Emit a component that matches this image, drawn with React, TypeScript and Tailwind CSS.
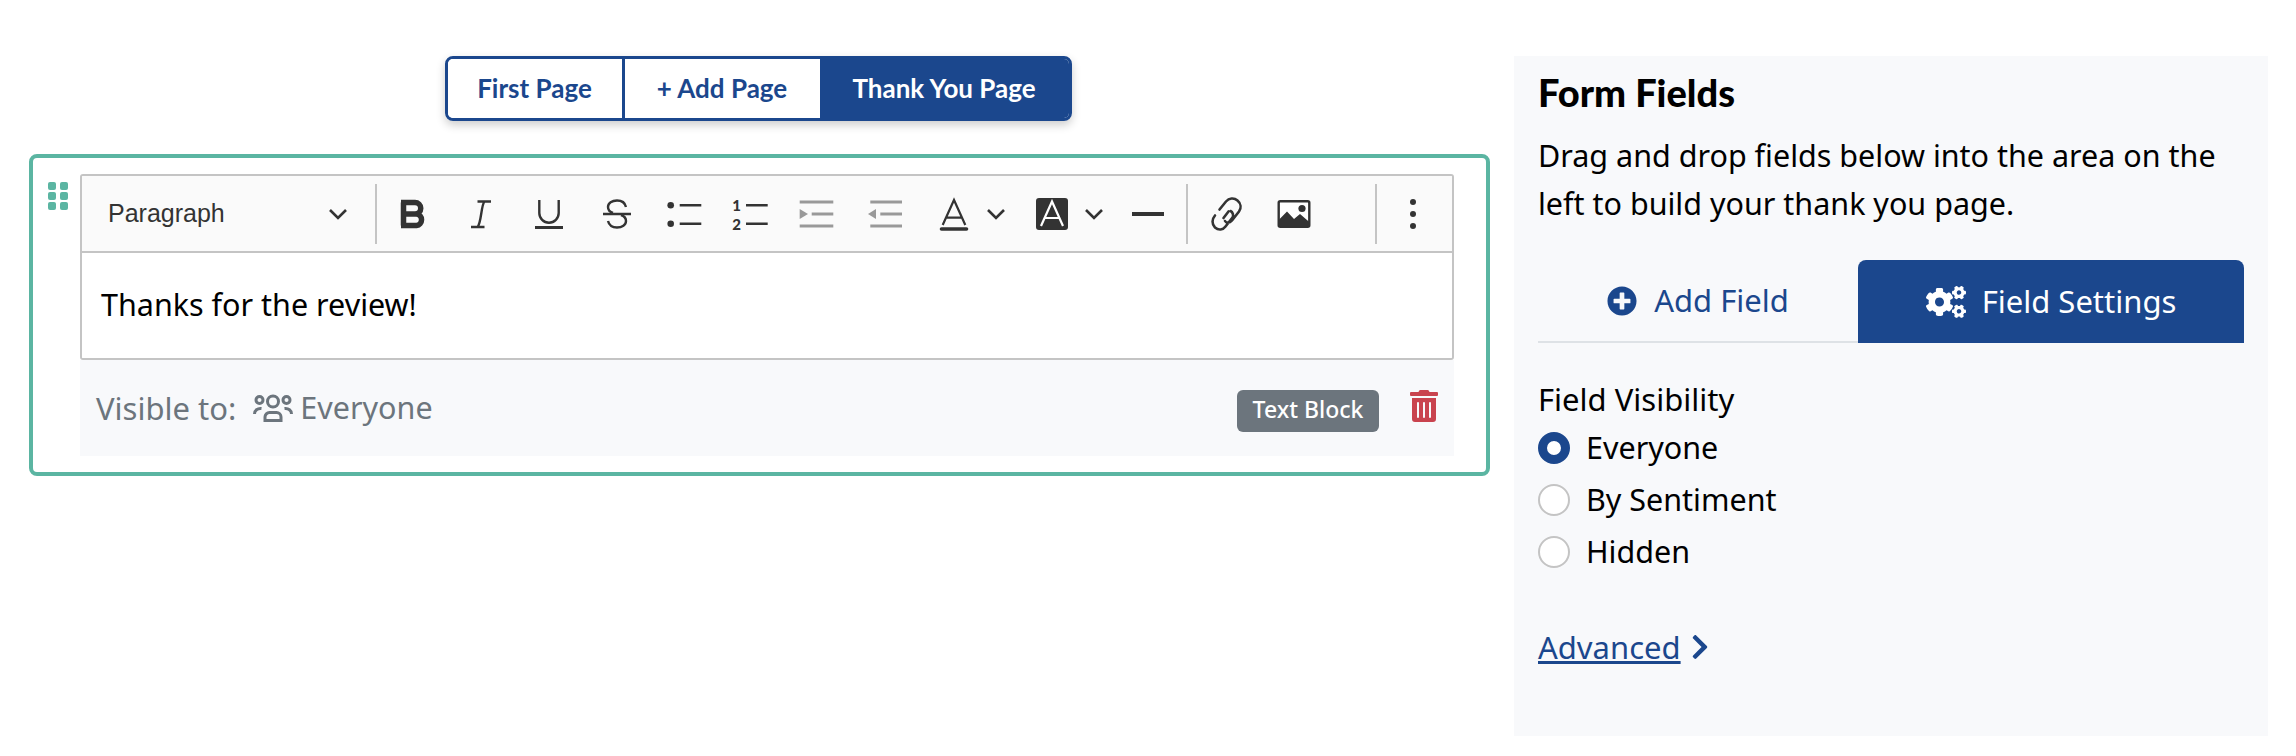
import { FaChevronRight, FaCogs, FaPlusCircle, FaTrashAlt } from 'react-icons/fa';

const Sep = ({ className = '' }: { className?: string }) => (
  <div className={`h-[60px] w-[2px] shrink-0 bg-[#c4c4c4] ${className}`} />
);

const Chevron = () => (
  <svg width="20" height="20" viewBox="0 0 20 20" fill="none" stroke="#333" strokeWidth="2.6">
    <path d="M2 6l8 8 8-8" />
  </svg>
);

const Ico = ({ children, className = 'w-[68px]' }: { children: React.ReactNode; className?: string }) => (
  <div className={`flex h-full shrink-0 items-center justify-center ${className}`}>
    <svg width="48" height="48" viewBox="0 0 48 48" fill="none" stroke="#333" strokeWidth="2.4">
      {children}
    </svg>
  </div>
);

const ChevronBox = () => (
  <div className="flex h-full w-[20px] shrink-0 items-center justify-center">
    <Chevron />
  </div>
);

const Toolbar = () => (
  <div className="flex h-[77px] items-center border-b-2 border-[#c4c4c4] bg-[#fafafa]">
    <div className="flex h-full w-[293px] shrink-0 items-center justify-between pl-[26px] pr-[27px]">
      <span className='font-["Liberation_Sans",sans-serif] text-[25px] text-[#333]'>Paragraph</span>
      <Chevron />
    </div>
    <Sep />
    <div className="w-[2px] shrink-0" />
    <Ico>
      <path strokeWidth="5.5" d="M14.5 12.500V35.500M12 12.500H26a5.700 5.700 0 0 1 0 11.500H14.500M26 24h1.500a5.800 5.800 0 0 1 0 11.500H12" />
    </Ico>
    <Ico>
      <path d="M20.500 11.500H34M14 37H27.500M27.500 11.500C24 15 24.500 33 20.500 37" />
    </Ico>
    <Ico>
      <path d="M14.300 10V23a9.700 9.700 0 0 0 19.400 0V10" />
      <path strokeWidth="3" d="M10 37.500H38" />
    </Ico>
    <Ico>
      <path d="M33 17C32 12.500 28 10.500 24 10.500C19 10.500 15 13 15 17C15 20 17 22 20 23M28 25C31 26 33 28 33 31C33 35 29 37.500 24 37.500C19 37.500 16 35 15 31" />
      <path strokeWidth="2.600" d="M10 24H38" />
    </Ico>
    <Ico className="w-[65px]">
      <circle cx="10.700" cy="15.300" r="3.300" fill="#333" stroke="none" />
      <circle cx="10.700" cy="33.700" r="3.300" fill="#333" stroke="none" />
      <path strokeWidth="2.600" d="M19.700 15.300H41.300M19.700 33.700H41.300" />
    </Ico>
    <Ico>
      <text x="10.500" y="21" textAnchor="middle" fill="#333" stroke="none" fontSize="15" fontWeight="900" fontFamily="Lato, sans-serif">1</text>
      <text x="10.500" y="40" textAnchor="middle" fill="#333" stroke="none" fontSize="15" fontWeight="900" fontFamily="Lato, sans-serif">2</text>
      <path strokeWidth="2.600" d="M20 15.300H41.700M20 33.700H41.700" />
    </Ico>
    <Ico className="w-[66px]">
      <path stroke="#999" strokeWidth="3" d="M6.700 12H40.300M18.700 24H40.300M6.700 36H40.300" />
      <path fill="#999" stroke="none" d="M6.700 19L15 24L6.700 29Z" />
    </Ico>
    <Ico className="w-[72px]">
      <path stroke="#999" strokeWidth="3" d="M8.300 12H40M18.300 24H40M8.300 36H40" />
      <path fill="#999" stroke="none" d="M6 24L14 19V29Z" />
    </Ico>
    <Ico className="w-[64px]">
      <path strokeWidth="2.200" d="M12.700 35L24 10L35.300 35M16.500 27.700H31.500" />
      <path strokeWidth="3.600" strokeLinecap="round" d="M11.500 39H36.500" />
    </Ico>
    <ChevronBox />
    <Ico className="ml-[16px] w-[60px]">
      <rect x="8" y="8" width="32" height="32" rx="3" fill="#333" stroke="none" />
      <path stroke="#fff" strokeWidth="2.200" d="M13 36L24 11.500L35 36M16.500 28H31.500" />
    </Ico>
    <div className="ml-[2px] flex h-full items-center">
      <ChevronBox />
    </div>
    <Ico className="ml-[10px] w-[68px]">
      <path strokeWidth="4" d="M8 24H40" />
    </Ico>
    <Sep className="ml-[4px]" />
    <Ico className="ml-[4px] w-[68px]">
      <path strokeWidth="2.600" strokeLinecap="round" d="M17.500 19.500L24 11.500C27 8 32 7.500 35.500 10.500C39 13.500 39.500 18 37 21.500L30 30.500C27.500 33.500 24 33 23 31M13 25.500C10 29 9.500 34 13 37.500C16.500 40.500 21 40 23.500 36.500L30.500 27.500C32 25 30.500 22 28.500 21M21.500 28L26.500 21.500" />
    </Ico>
    <Ico className="w-[68px]">
      <rect x="8.700" y="11.200" width="30.600" height="25.600" rx="1.500" stroke="#333" strokeWidth="2.400" fill="#fff" />
      <circle cx="32" cy="18.500" r="3.600" fill="#333" stroke="none" />
      <path fill="#333" stroke="none" d="M8.700 30L17 21.500L24 29L30 24L39.300 32V36.800H8.700Z" />
    </Ico>
    <Sep className="ml-auto" />
    <Ico className="ml-[2px] mr-[5px] w-[68px]">
      <circle cx="24" cy="12" r="3" fill="#333" stroke="none" />
      <circle cx="24" cy="24" r="3" fill="#333" stroke="none" />
      <circle cx="24" cy="36" r="3" fill="#333" stroke="none" />
    </Ico>
  </div>
);

const Radio = ({ label, checked = false }: { label: string; checked?: boolean }) => (
  <div className="flex h-[52px] items-center gap-4">
    {checked ? (
      <span className="h-8 w-8 rounded-full border-[9px] border-[#1b478d] bg-white" />
    ) : (
      <span className="h-8 w-8 rounded-full border-2 border-[#c4c4c4] bg-white" />
    )}
    <span className="pb-[2px] text-[30.5px] leading-10 text-black">{label}</span>
  </div>
);

export default function App() {
  const pageBtn = 'flex h-full items-center justify-center font-["Lato",sans-serif] text-[26px] font-bold';
  return (
    <div className='flex h-[756px] w-[2296px] bg-white pt-14 font-["Noto_Sans",sans-serif]'>
      <div className="ml-[29px] w-[1461px] shrink-0">
        <div className="flex justify-center pr-[3px]">
          <div className="flex h-[65px] w-[627px] overflow-hidden rounded-lg border-[3px] border-[#1b478d] shadow-[0_4px_10px_rgba(0,0,0,0.2)]">
            <div className={`${pageBtn} w-[177px] border-r-[3px] border-[#1b478d] bg-white text-[#1b478d]`}>First Page</div>
            <div className={`${pageBtn} w-[195px] bg-white text-[#1b478d]`}>+ Add Page</div>
            <div className={`${pageBtn} flex-1 bg-[#1b478d] text-white`}>Thank You Page</div>
          </div>
        </div>

        <div className="mt-[33px] flex h-[322px] gap-3 rounded-lg border-4 border-[#5bb5a2] pb-4 pl-[15px] pr-8 pt-4">
          <div className="mt-2 grid h-7 w-5 shrink-0 grid-cols-2 gap-x-1 gap-y-[2px]">
            {[0, 1, 2, 3, 4, 5].map((i) => (
              <span key={i} className="h-2 w-2 rounded-[2px] bg-[#5bb5a2]" />
            ))}
          </div>
          <div className="flex flex-1 flex-col">
            <div className="overflow-hidden rounded-[3px] border-2 border-[#c4c4c4]">
              <Toolbar />
              <div className="flex h-[105px] items-center bg-white pb-[2px] pl-[19px] text-[30.5px] text-black">Thanks for the review!</div>
            </div>
            <div className="flex flex-1 items-center bg-[#f8f9fb] pl-4 pr-[16px] text-[31px] text-[#6c757d]">
              <span>Visible to:</span>
              <svg className="ml-[17px] mr-[7px]" width="40" height="30" viewBox="0 0 40 30" fill="none" stroke="#6c757d" strokeWidth="3">
                <circle cx="20" cy="8.500" r="5.500" />
                <circle cx="6.500" cy="7" r="3.500" />
                <circle cx="33.500" cy="7" r="3.500" />
                <path d="M12 27.500V24a4.500 4.500 0 0 1 4.500-4.500h7A4.500 4.500 0 0 1 28 24v3.500ZM1.500 21c0-3.500 3-6 7-5.500M38.500 21c0-3.500-3-6-7-5.500" />
              </svg>
              <span className="text-[30.5px]">Everyone</span>
              <span className="ml-auto mt-[6px] flex h-[42px] w-[142px] items-center justify-center rounded-md bg-[#6c757d] pb-[3px] text-[23px] font-medium text-white">Text Block</span>
              <div className="mb-[5px] ml-[31px] flex">
                <FaTrashAlt className="h-8 w-7 text-[#c9434e]" />
              </div>
            </div>
          </div>
        </div>
      </div>

      <div className="ml-6 h-[680px] w-[754px] shrink-0 bg-[#f8f9fb] px-6 pt-3">
        <h2 className='font-["Lato",sans-serif] text-[38px] font-black leading-[48px] text-black'>Form Fields</h2>
        <p className="mt-[15px] text-[30.5px] leading-[48px] text-black">
          Drag and drop fields below into the area on the
          <br />
          left to build your thank you page.
        </p>
        <div className="mt-[33px] flex h-[83px] border-b-2 border-[#dee2e6] text-[31px]">
          <div className="flex w-[320px] items-center justify-center gap-[17px] text-[#1b478d]">
            <FaPlusCircle className="h-[30px] w-[30px]" />
            <span>Add Field</span>
          </div>
          <div className="-mb-[2px] flex w-[386px] items-center justify-center gap-4 rounded-t-lg bg-[#1b478d] text-white">
            <FaCogs className="h-8 w-10" />
            <span>Field Settings</span>
          </div>
        </div>
        <div className="mt-9 text-[31px] leading-10 text-black">Field Visibility</div>
        <div className="mt-[3px]">
          <Radio label="Everyone" checked />
          <Radio label="By Sentiment" />
          <Radio label="Hidden" />
        </div>
        <div className="mt-[49px] flex items-center gap-[10px] text-[31px] leading-10 text-[#1b478d]">
          <span className="underline">Advanced</span>
          <FaChevronRight className="h-[28px] w-[18px]" />
        </div>
      </div>
    </div>
  );
}
